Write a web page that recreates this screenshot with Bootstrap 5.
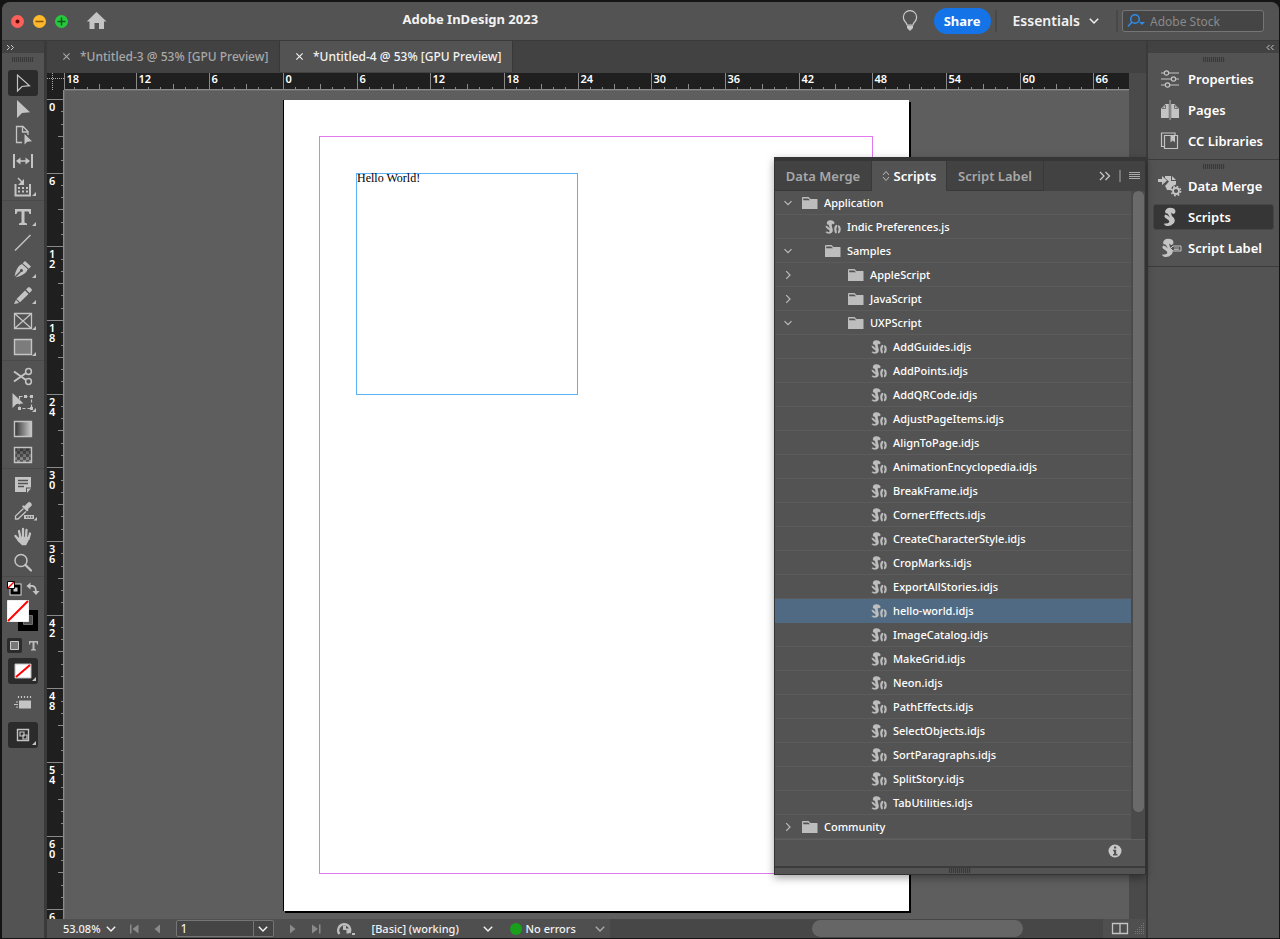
<!DOCTYPE html>
<html lang="en">
<head>
<meta charset="utf-8">
<meta name="viewport" content="width=device-width, initial-scale=1">
<title>Adobe InDesign 2023</title>
<link href="https://cdn.jsdelivr.net/npm/bootstrap@5.3.0/dist/css/bootstrap.min.css" rel="stylesheet">
<style>
:root{--face:#535353;--well:#424242;--edge:#3a3a3a;--icon:#c4c4c4}
body{background:#141414;color:#f2f2f2;font:500 11px/16px "Noto Sans",sans-serif}
button{color:inherit;font:inherit;background:none;border:0;padding:0}
a{color:inherit;text-decoration:none}
svg{display:block;flex:none}
h1{font-size:13px;line-height:16px;font-weight:700}
.app{min-height:100vh;padding:2px 1px 1px 2px}
.window{border-radius:8px 8px 0 0;background:var(--edge);overflow:hidden}
.titlebar{height:38px;background:var(--face);padding:0 15px 0 9px}
.light-dot{width:13px;height:13px;border-radius:50%;display:block}
.name-box{padding-right:70px}
.share{height:26px;width:57px;border-radius:13px;background:#1473e6;color:#fff;font-size:13px;font-weight:700}
.rule-v{width:2px;height:22px;background:#484848}
.workspace{font-size:14px;font-weight:600}
.stock{width:142px;height:22px;border:1px solid #757575;border-radius:3px;background:#454545;padding:0 4px}
.stock input{background:none;border:0;outline:0;color:#fff;width:100px;font-size:12px;padding:0;height:18px}
.stock input::placeholder{color:#8a8a8a;opacity:1}
.strip{height:12px;background:var(--well)}
.grip{width:22px;height:5px;background:repeating-linear-gradient(90deg,#3a3a3a 0 1px,#4e4e4e 1px 2px)}
.tools{width:42px;background:var(--face)}
.tool{width:30px;height:26px;color:var(--icon);border-radius:3px}
.tool.chosen{background:#2b2b2b}
.tool-line{height:4px;border-top:1px solid #4a4a4a;width:42px}
.tool-modes{gap:6px}
.doc-area{margin-left:3px;min-width:0}
.doc-tabs{height:32px;background:var(--well)}
.doc-tab{width:233px;font-size:12px;color:#a8a8a8;border-right:1px solid #383838;padding-left:15px;gap:9px;height:31px}
.doc-tab.open{background:var(--face);color:#f4f4f4}
.corner{width:17px;height:17px}
.ruler{background:#1f1f1f;overflow:hidden}
.ruler text{fill:#fff;font:600 11px "Noto Sans",sans-serif}
.digits{color:#fff;font:600 11px/10px "Noto Sans",sans-serif;width:8px;word-break:break-all}
.ruler-h{height:17px;width:0}
.ruler-v{width:17px;height:829px}
.canvas{background:#5e5e5e;min-height:829px;padding:9px 0 8px 218px;border-left:1px solid #6c6c6c;border-top:1px solid #6c6c6c;overflow:hidden;min-width:0}
.sheet{width:626px;height:811px;background:#fff;border-left:1px solid #000;box-shadow:2px 2px 0 #000;padding:36px 36px 36px 35px}
.margins{width:554px;height:738px;border:1px solid #e078ee;padding:36px}
.frame{width:222px;height:222px;border:1px solid #5cb0f8;color:#000;font:12px/9px "Liberation Serif",serif}
.scroll-v{width:17px;background:#4a4a4a}
.status{height:19px;background:#4f4f4f}
.status .track{background:#474747}
.status .thumb{width:211px;height:17px;border-radius:9px;background:#666;margin-right:32px}
.page-no{width:78px;height:17px;background:#454545;border:1px solid #757575;border-radius:2px 0 0 2px;color:#fff;font-size:12px;padding:0 4px;margin-left:13px}
.page-pick{width:20px;height:17px;background:#454545;border:1px solid #757575;border-left:0;border-radius:0 2px 2px 0}
.preset{width:110px}
.preflight{width:68px}
.dock{width:131px;background:var(--face);margin-left:2px}
.dock-item{height:26px;width:121px;margin:0 5px 5px 5px;padding-left:4px;gap:6px;font-size:13px;font-weight:600;color:#fff;border:1px solid transparent;border-radius:3px}
.dock-item.chosen{background:#363636;border-color:#474747}
.dock-group{border-bottom:1px solid #3c3c3c}
.palette{right:0;top:116px;width:372px;background:var(--face);border:1px solid #333;border-top:4px solid #363636;box-shadow:0 3px 8px rgba(0,0,0,.35)}
.palette-tabs{height:30px;background:var(--well);font-size:13px;font-weight:600;color:#a8a8a8}
.palette-tabs .ptab{border-right:1px solid #383838;border-bottom:1px solid #383838}
.palette-tabs .ptab.open{background:var(--face);color:#fff;border-bottom-color:var(--face)}
.wide-tab{width:97px}
.slim-tab{width:75px}
.tree-box{border-bottom:1px solid #606060}
.tree-row{height:24px;border-bottom:1px solid #5b5b5b;width:100%;color:#fff;text-align:left}
.tree-row.chosen{background:#4f6a82;border-color:#4f6a82}
.twist{width:19px;margin-left:8px}
.lv0{padding-left:0}.lv1{padding-left:23px}.lv2{padding-left:46px}.lv3{padding-left:69px}
.tree-row .pic{width:22px}
.bar{width:14px;background:#4a4a4a;padding:0 1px 0 2px}
.bar div{height:621px;border-radius:6px;background:#6a6a6a}
.foot{height:26px;padding-right:23px}
.foot-edge{height:8px;border-top:2px solid #3c3c3c}
</style>
</head>
<body>
<svg width="0" height="0" class="position-absolute" aria-hidden="true">
<symbol id="down" viewBox="0 0 10 10"><path d="M1.500 3.200 5 6.700l3.500-3.500" fill="none" stroke="currentColor" stroke-width="1.200"/></symbol>
<symbol id="right" viewBox="0 0 10 10"><path d="M3.200 1.200 7 5 3.200 8.800" fill="none" stroke="currentColor" stroke-width="1.200"/></symbol>
<symbol id="cross" viewBox="0 0 10 10"><path d="M1.500 1.500l7 7m0-7-7 7" fill="none" stroke="currentColor" stroke-width="1.200"/></symbol>
<symbol id="folder" viewBox="0 0 16 13"><path d="M0 1.500Q0 0.500 1 0.500H6.500L8.500 2.500H15Q15.500 2.500 15.500 3V12.500H0z" fill="#bdbdbd"/><path d="M1.200 2H6.200L8 3.800H1.200z" fill="#535353"/></symbol>
<symbol id="script" viewBox="0 0 16 14"><path d="M1.800 3.200Q2 .4 5.200.3T9.600 2.600Q9.600 4.600 7.600 4.200L7 3.600Q6.300 5.400 7.300 7.800 9 12.400 5.200 13.600 1.800 14 .4 12q1.600-1.200 3.400.2Q5 11.800 4.400 10.200L2.200 8.800Q.4 7.400.5 5.600 3 6 4.700 8.400 4.200 6 3.600 4.800 1.800 4.800 1.800 3.200z" fill="#bdbdbd"/><path d="M11.600 4.800Q9.200 5.600 9.200 9q0 3.400 1.600 4.600 1.400-.4 1-1.800-1-3 .6-6.200zM13.400 5q2.400 1 2.400 4.200 0 3-2.200 4.400-1-.6-.5-2 1.300-2.800-.3-5.400z" fill="#bdbdbd"/></symbol>
<symbol id="bigs" viewBox="0 0 16 20"><path d="M3 5Q3.500 1 8 .8q5.500.2 5.500 4-.5 2.400-2.600 2.200L9.500 5.500Q8.800 8.500 11.500 10.500q2.600 3 0 6Q8 20 4 18.800q-2.200-.8-1.800-2.400 3.600.6 5.200-1.400 0-2-2.800-3.200Q1 10 3.200 7.600q2.800.4 4.600 3-1-2.400-2-3.800Q3.400 6.600 3 5z" fill="#c4c4c4"/></symbol>
</svg>

<div class="app d-flex flex-column"><div class="window d-flex flex-column flex-grow-1">
<header class="titlebar d-flex align-items-center">
  <div class="d-flex align-items-center" style="gap:9px">
    <button aria-label="Close" class="light-dot"><svg width="13" height="13"><circle cx="6.500" cy="6.500" r="6.500" fill="#fc605a"/><circle cx="6.500" cy="6.500" r="2" fill="#5c0a08"/></svg></button>
    <button aria-label="Minimise" class="light-dot"><svg width="13" height="13"><circle cx="6.500" cy="6.500" r="6.500" fill="#fdb92b"/><path d="M2.500 6.500h8" stroke="#8a5304" stroke-width="1.400"/></svg></button>
    <button aria-label="Zoom" class="light-dot"><svg width="13" height="13"><circle cx="6.500" cy="6.500" r="6.500" fill="#27c83f"/><path d="M2.500 6.500h8m-4-4v8" stroke="#0a5c14" stroke-width="1.500"/></svg></button>
    <button aria-label="Home" class="ms-2"><svg width="24" height="18"><path d="M11.500 0 21.500 9.500H19V17H14V11H9.500V17H4.500V9.500H1.800z" fill="#c4c4c4"/></svg></button>
  </div>
  <h1 class="name-box flex-fill text-center m-0 pb-1">Adobe InDesign 2023</h1>
  <button aria-label="Tips" class="me-3"><svg width="16" height="22"><path d="M5 15Q5 13.500 3 11.500A6.600 6.600 0 1 1 13 11.500Q11 13.500 11 15z" fill="none" stroke="#c8c8c8" stroke-width="1.200"/><path d="M5 15.500H11V18L9.500 19.500 8 21 6.500 19.500 5 18z" fill="#c8c8c8"/></svg></button>
  <button class="share">Share</button>
  <span class="rule-v ms-1 me-3"></span>
  <button class="workspace d-flex align-items-center gap-2">Essentials<svg width="12" height="12"><use href="#down"/></svg></button>
  <span class="rule-v ms-3 me-1"></span>
  <label class="stock d-flex align-items-center gap-1"><svg width="19" height="16" fill="none" stroke="#2f8ceb" stroke-width="1.500"><circle cx="8" cy="6" r="4.300"/><path d="M5 9 1 13.500"/><path d="M12 9h6l-3 3z" fill="#2f8ceb" stroke="none"/></svg><input type="text" placeholder="Adobe Stock" aria-label="Search Adobe Stock"></label>
</header>

<div class="d-flex flex-grow-1" style="padding-top:1px">
<nav class="tools d-flex flex-column align-items-center" aria-label="Tools">
  <div class="strip w-100 ps-1"><svg width="9" height="12" fill="none" stroke="#ccc"><path d="M1 4l2.500 2.500L1 9M5 4l2.500 2.500L5 9"/></svg></div>
  <div class="grip mt-1 mb-2"></div>
  <button class="tool chosen" aria-label="Selection"><svg width="30" height="26"><path d="M9.500 5v16L14 16.500l7.500-.8z" fill="none" stroke="currentColor" stroke-width="1.200"/></svg></button>
  <button class="tool" aria-label="Direct selection"><svg width="30" height="26"><path d="M9 4v18l5-5 8-.8z" fill="currentColor"/></svg></button>
  <button class="tool" aria-label="Page"><svg width="30" height="26"><path d="M14 20.500H8.500V4.500H15L20 9.500V13M14.500 4.500V10H20" fill="none" stroke="currentColor" stroke-width="1.300"/><path d="M16.500 12v10.500l2.800-2.800 4.700-.5z" fill="currentColor"/></svg></button>
  <button class="tool" aria-label="Gap"><svg width="30" height="26" stroke="currentColor"><path d="M6 6v14M24 6v14" stroke-width="2"/><path d="M9 13h12" stroke-width="1.500"/><path d="M8 13l4.500-3.500v7zM22 13l-4.500-3.500v7z" fill="currentColor" stroke="none"/></svg></button>
  <button class="tool" aria-label="Content collector"><svg width="30" height="26"><path d="M7.500 10v11.500h14.500V10" fill="none" stroke="currentColor" stroke-width="2"/><path d="M10 13h2v2h-2zm4 0h2v2h-2zm4 0h2v2h-2zM10 16.500h2v2h-2zm4 0h2v2h-2zm4 0h2v2h-2z" fill="currentColor"/><path d="M10 4l5 5" stroke="currentColor" stroke-width="1.500"/><path d="M16 5v6h-6z" fill="currentColor"/><path d="M28 18v4h-4z" fill="currentColor"/></svg></button>
  <div class="tool-line"></div>
  <button class="tool" aria-label="Type"><svg width="30" height="26" fill="currentColor"><path d="M7 5H23V10H21.500L20.500 7.500H16.500V18.500L19 19.500V21H11V19.500L13.500 18.500V7.500H9.500L8.500 10H7z"/><path d="M28 18v4h-4z"/></svg></button>
  <button class="tool" aria-label="Line"><svg width="30" height="26"><path d="M7 20.500 22.500 5" stroke="currentColor" stroke-width="1.500"/></svg></button>
  <button class="tool" aria-label="Pen"><svg width="30" height="26" fill="currentColor"><path d="M17 5l6 5.500-2.200 2.200L14.700 7.200zM14 8l5.800 5.300Q18 19 7.500 21.500L13 16a1.500 1.500 0 1 0-1-1L6.500 20.500Q8.500 10 14 8z"/><path d="M28 18v4h-4z"/></svg></button>
  <button class="tool" aria-label="Pencil"><svg width="30" height="26" fill="currentColor"><path d="M18 7.500l2-2q1-1 2 0l1.500 1.500q1 1 0 2l-2 2zM17 8.500l3.500 3.500-8.500 8.200L8.500 17zM8 17.800 11 21l-5 1z"/><path d="M28 18v4h-4z"/></svg></button>
  <button class="tool" aria-label="Rectangle frame"><svg width="30" height="26"><path d="M6.500 5.500h17v15h-17zl17 15m0-15-17 15" fill="none" stroke="currentColor" stroke-width="1.300"/><path d="M28 18v4h-4z" fill="currentColor"/></svg></button>
  <button class="tool" aria-label="Rectangle"><svg width="30" height="26"><path d="M6.500 5.500h17v15h-17z" fill="#7c7c7c" stroke="currentColor" stroke-width="1.400"/><path d="M28 18v4h-4z" fill="currentColor"/></svg></button>
  <div class="tool-line"></div>
  <button class="tool" aria-label="Scissors"><svg width="30" height="26" fill="none" stroke="currentColor" stroke-width="1.500"><circle cx="20.500" cy="7.500" r="2.900"/><circle cx="20.500" cy="17.500" r="2.900"/><path d="M18 9 6 17.500M18 16 6 7.500" stroke-width="2"/></svg></button>
  <button class="tool" aria-label="Free transform"><svg width="30" height="26"><path d="M11.500 6.500h12v12h-12z" fill="none" stroke="currentColor" stroke-width="1.200" stroke-dasharray="3 2"/><path d="M10 17h3v3h-3zM22 17h3v3h-3zM22 5h3v3h-3zM16 5h3v3h-3z M4.500 3v15l4-4 7-.5z" fill="currentColor"/><path d="M28 18v4h-4z" fill="currentColor"/></svg></button>
  <button class="tool" aria-label="Gradient swatch"><svg width="30" height="26"><defs><linearGradient id="g"><stop stop-color="#333"/><stop offset="1" stop-color="#ccc"/></linearGradient></defs><path d="M6.500 5.500h17v15h-17z" fill="url(#g)" stroke="currentColor" stroke-width="1.400"/></svg></button>
  <button class="tool" aria-label="Gradient feather"><svg width="30" height="26"><defs><pattern id="ck" width="6" height="6" patternUnits="userSpaceOnUse"><path d="M0 0h6v6H0z" fill="#999"/><path d="M0 0h3v3H0zM3 3h3v3H3z" fill="#5a5a5a"/></pattern><linearGradient id="fade" x2="0" y2="1"><stop stop-color="#222" stop-opacity=".7"/><stop offset="1" stop-color="#222" stop-opacity="0"/></linearGradient></defs><path d="M6.500 5.500h17v15h-17z" fill="url(#ck)"/><path d="M6.500 5.500h17v15h-17z" fill="url(#fade)" stroke="currentColor" stroke-width="1.400"/></svg></button>
  <div class="tool-line"></div>
  <button class="tool" aria-label="Note"><svg width="30" height="26"><path d="M7 5h16v10.500h-5V20H7z M23 16.500 19 21v-4.500z" fill="currentColor"/><path d="M10 8.500h10M10 11.500h10M10 14.500h6" stroke="#535353" stroke-width="1.300"/></svg></button>
  <button class="tool" aria-label="Colour theme"><svg width="30" height="26"><path d="M16.500 8 20 4.500q1.500-1 3 .5t.3 3L20 11l.5 1.200-1.500 1.300-5-5 1.200-1.300z" fill="currentColor"/><path d="M15.500 10.500 7.500 18v3H10l8-7.500" fill="none" stroke="currentColor" stroke-width="1.300"/><path d="M16 17h10v4H16z" fill="currentColor"/><path d="M18 19h7" stroke="#535353" stroke-width="1.500" stroke-dasharray="1.500 1"/><path d="M29 19v3.500h-3.500z" fill="currentColor"/></svg></button>
  <button class="tool" aria-label="Hand"><svg width="30" height="26" fill="none" stroke="currentColor" stroke-linecap="round" stroke-width="2.300"><path d="M11 7l1.500 7M15 5v8M18.500 6 18 14M22 9.500 20.500 15M7.500 12l4 5"/><path d="M11.500 14h8q.5 3-2 6h-3q-2-2-4-4z" fill="currentColor"/></svg></button>
  <button class="tool" aria-label="Zoom"><svg width="30" height="26" fill="none" stroke="currentColor"><circle cx="13" cy="10.500" r="6" stroke-width="1.500"/><path d="M17.500 15 23 20.500" stroke-width="2.300" stroke-linecap="round"/></svg></button>
  <div class="tool-line"></div>
  <div class="d-flex"><button aria-label="Default fill and stroke"><svg width="20" height="18"><path d="M7 6h7v7H7z" fill="#666" stroke="#ddd" stroke-width="5"/><path d="M7 6h7v7H7z" fill="#ccc" stroke="#000" stroke-width="3"/><path d="M2.500 1.500h7v7h-7z" fill="#fff" stroke="#000"/><path d="M3 8l6-6" stroke="#f00" stroke-width="1.500"/></svg></button><button aria-label="Swap fill and stroke"><svg width="16" height="18"><path d="M5 6q6-1 6 5.500" fill="none" stroke="#c4c4c4" stroke-width="1.800"/><path d="M5.500 2.500v7L1.500 6zM7.500 11h7L11 15z" fill="#c4c4c4"/></svg></button></div>
  <svg class="mb-1" width="32" height="36" role="img" aria-label="Fill and stroke"><path d="M14 15h14v15H14z" fill="#535353" stroke="#000" stroke-width="6"/><path d="M16.500 17.500h9v9h-9z" fill="none" stroke="#707070"/><path d="M.5 2.500h21v21H.5z" fill="#fff" stroke="#eee"/><path d="M1 23 21 3" stroke="#f00" stroke-width="2"/></svg>
  <div class="d-flex gap-1"><button aria-label="Format container"><svg width="15" height="16"><rect width="15" height="15" rx="2" fill="#2b2b2b"/><path d="M3.500 3.500h8v8h-8z" fill="#777" stroke="#ccc"/></svg></button><button aria-label="Format text"><svg width="14" height="16" fill="#bbb"><path d="M3 3h9v3.500h-1L10.500 4.500H8.500V11l1.500.5v1H5v-1L6.500 11V4.500H4.500L4 6.500H3z"/></svg></button></div>
  <div class="tool-modes d-flex flex-column mt-1">
  <button class="tool chosen" aria-label="Apply none"><svg width="30" height="26"><path d="M7 6h16v14H7z" fill="#fff" stroke="#bbb"/><path d="M8 19 22 7" stroke="#f00" stroke-width="2"/><path d="M28 19v4h-4z" fill="currentColor"/></svg></button>
  <button class="tool" aria-label="View mode"><svg width="30" height="26"><path d="M11 10.500h12v8H11z" fill="currentColor"/><path d="M10.500 6v2m3-2v2m3-2v2m3-2v2m3-2v2M8 12h2M6 14.500h4M8 17h2" stroke="currentColor" stroke-width="1.200"/></svg></button>
  <button class="tool chosen" aria-label="Screen mode"><svg width="30" height="26"><path d="M9.500 7.500h11v11h-11z" fill="none" stroke="currentColor" stroke-width="1.400"/><path d="M12 10h4v4h-4zm3 3h4v4h-4z" fill="none" stroke="currentColor" stroke-width="1.200"/><path d="M28 19v4h-4z" fill="currentColor"/></svg></button>
  </div>
</nav>

<main class="doc-area d-flex flex-column flex-fill position-relative">
  <div class="doc-tabs d-flex">
    <div class="doc-tab d-flex align-items-center"><button aria-label="Close Untitled-3"><svg width="9" height="9"><use href="#cross"/></svg></button><a href="#">*Untitled-3 @ 53% [GPU Preview]</a></div>
    <div class="doc-tab open d-flex align-items-center"><button aria-label="Close Untitled-4"><svg width="9" height="9"><use href="#cross"/></svg></button><a href="#">*Untitled-4 @ 53% [GPU Preview]</a></div>
  </div>
  <div class="d-flex">
    <div class="ruler corner"><svg width="17" height="17" stroke="#aaa" stroke-dasharray="1 1"><path d="M5.500 0v17M0 5.500h17"/></svg></div>
    <div class="ruler ruler-h flex-fill"><svg id="hr" width="100%" height="17"></svg></div>
    <div class="scroll-v"></div>
  </div>
  <div class="d-flex flex-grow-1">
    <div class="ruler ruler-v"><svg id="vr" width="17" height="829"></svg></div>
    <div class="canvas flex-fill">
      <div class="sheet"><div class="margins"><div class="frame">Hello World!</div></div></div>
    </div>
    <div class="scroll-v"></div>
  </div>
  <footer class="status d-flex align-items-center">
    <button class="d-flex align-items-center gap-1 ms-3">53.08%<svg width="12" height="12"><use href="#down"/></svg></button>
    <button class="ms-2 ps-1" aria-label="First page"><svg width="12" height="10" fill="#8a8a8a"><path d="M1 .5h1.500v9H1zM9.500.5v9L3.500 5z"/></svg></button>
    <button class="ms-2 ps-1" aria-label="Previous page"><svg width="10" height="10" fill="#8a8a8a"><path d="M7 .5v9L1.500 5z"/></svg></button>
    <input type="text" class="page-no" value="1" aria-label="Page number">
    <button class="page-pick d-flex align-items-center justify-content-center" aria-label="Choose page"><svg width="12" height="12"><use href="#down"/></svg></button>
    <button class="ms-3" aria-label="Next page"><svg width="10" height="10" fill="#8a8a8a"><path d="M0 .5v9L5.500 5z"/></svg></button>
    <button class="ms-2 ps-1" aria-label="Last page"><svg width="12" height="10" fill="#8a8a8a"><path d="M0 .5v9L6 5zM7 .5h1.500v9H7z"/></svg></button>
    <button class="ms-2 ps-1" aria-label="Open in Bridge"><svg width="20" height="16"><path d="M3.500 13A6 6 0 1 1 13.500 12" fill="none" stroke="#bdbdbd" stroke-width="2.500"/><path d="M7 4.500h3v3h3v5H10.500V9H7z" fill="#bdbdbd"/><path d="M16 12h3v2h-3z" fill="#bdbdbd"/></svg></button>
    <button class="ms-3 d-flex align-items-center"><span class="preset text-start">[Basic] (working)</span><svg width="12" height="12"><use href="#down"/></svg></button>
    <button class="ms-3 d-flex align-items-center"><svg width="12" height="12"><circle cx="6" cy="6" r="6" fill="#18a01c"/></svg><span class="preflight text-start ms-1">No errors</span><svg width="12" height="12" style="color:#aaa"><use href="#down"/></svg></button>
    <div class="track flex-fill h-100 d-flex align-items-center justify-content-end ms-1 pe-5"><div class="thumb"></div></div>
    <button aria-label="Split view" class="ms-2 me-1"><svg width="18" height="13"><path d="M1.500 1.500h15v10h-15zM9 1.500v10" fill="none" stroke="#c4c4c4" stroke-width="1.300"/></svg></button>
    <svg width="13" height="13" stroke="#777" stroke-dasharray="1 1"><path d="M10.500 1v12M8.500 3v10M6.500 5v8M4.500 7v6M2.500 9v4"/></svg>
  </footer>

  <section class="palette position-absolute">
    <div class="palette-tabs d-flex">
      <a href="#" class="ptab wide-tab d-flex align-items-center justify-content-center">Data Merge</a>
      <a href="#" class="ptab slim-tab open d-flex align-items-center justify-content-center gap-1"><svg width="8" height="12" fill="none" stroke="#bbb"><path d="M1 5l3-3.500L7 5M1 7l3 3.500L7 7"/></svg>Scripts</a>
      <a href="#" class="ptab wide-tab d-flex align-items-center justify-content-center">Script Label</a>
      <div class="flex-fill d-flex align-items-center justify-content-end gap-2 pe-1"><button aria-label="Collapse"><svg width="12" height="12" fill="none" stroke="#ccc" stroke-width="1.200"><path d="M1 2l4 4-4 4M6.500 2l4 4-4 4"/></svg></button><svg width="2" height="12"><path d="M1 0v12" stroke="#aaa"/></svg><button aria-label="Panel menu"><svg width="12" height="12" stroke="#aaa"><path d="M0 2.500h11M0 4.500h11M0 6.500h11M0 8.500h11"/></svg></button></div>
    </div>
    <div class="tree-box d-flex">
      <div class="flex-fill" id="tree"></div>
      <div class="bar"><div></div></div>
    </div>
    <div class="foot d-flex align-items-center justify-content-end pb-1"><button aria-label="Information"><svg width="14" height="14"><circle cx="7" cy="7" r="6.500" fill="#c8c8c8"/><path d="M6 2.500h2.200v2H6zM5 5.700h3.200v4.300H9.500v1.500H5V10h1V7.200H5z" fill="#535353"/></svg></button></div>
    <div class="foot-edge d-flex justify-content-center"><div class="grip"></div></div>
  </section>
</main>

<aside class="dock">
  <div class="strip d-flex justify-content-end pe-1"><svg width="9" height="12" fill="none" stroke="#ccc"><path d="M3.500 4 1 6.500 3.500 9M7.500 4 5 6.500 7.500 9"/></svg></div>
  <div class="dock-group pt-1">
    <div class="grip mx-auto mb-1"></div>
    <a href="#" class="dock-item d-flex align-items-center"><svg width="24" height="22" fill="none" stroke="#c4c4c4" stroke-width="1.200"><path d="M3 5h3m5 0h10M3 11h10m5 0h3M3 17h4m5 0h9"/><circle cx="8.500" cy="5" r="2.200"/><circle cx="15.500" cy="11" r="2.200"/><circle cx="9.500" cy="17" r="2.200"/></svg>Properties</a>
    <a href="#" class="dock-item d-flex align-items-center"><svg width="24" height="22" fill="#c4c4c4"><path d="M3 19V9.500L7.500 5H10.800V19zM21 19V9.500L16.500 5H13.200V19z"/><path d="M4 9.500H7.500V6zM20 9.500H16.500V6z" stroke="#535353" stroke-width=".7"/><path d="M11.600 1h.9v20h-.9z"/></svg>Pages</a>
    <a href="#" class="dock-item d-flex align-items-center"><svg width="24" height="22" fill="none" stroke="#c4c4c4" stroke-width="1.200"><path d="M6.500 5.500h13v13h-13zM6 16.500H3.500V3H17v2"/><path d="M12.500 5.500v7l2.200-2 2.300 2v-7z" fill="#c4c4c4" stroke="none"/></svg>CC Libraries</a>
  </div>
  <div class="dock-group pt-1">
    <div class="grip mx-auto mb-1"></div>
    <a href="#" class="dock-item d-flex align-items-center"><svg width="24" height="24" fill="#c4c4c4"><path d="M0 5h4V2l5 4.500L4 11V8H0z"/><path d="M7 2h6v5h5v3.500l-4 2-1 3.500H9q-1-3-2-4l4-4.500L7 4z M14 2l4 4h-4z"/><circle cx="18" cy="17" r="3" fill="#535353" stroke="#c4c4c4" stroke-width="1.800"/><circle cx="18" cy="17" r="4.600" fill="none" stroke="#c4c4c4" stroke-width="1.600" stroke-dasharray="1.800 1.810"/></svg>Data Merge</a>
    <a href="#" class="dock-item chosen d-flex align-items-center"><svg width="24" height="20" viewBox="-4 0 24 20"><use href="#bigs" width="16" height="20"/></svg>Scripts</a>
    <a href="#" class="dock-item d-flex align-items-center"><svg width="24" height="20" viewBox="-2 0 24 20"><use href="#bigs" width="16" height="20"/><path d="M10.500 10.500 13 8H21v5h-8z" fill="#535353" stroke="#c4c4c4"/><path d="M14 10h5M14 11.500h5" stroke="#c4c4c4" stroke-width=".8"/></svg>Script Label</a>
  </div>
</aside>
</div>
</div></div>

<script src="https://cdn.jsdelivr.net/npm/bootstrap@5.3.0/dist/js/bootstrap.bundle.min.js"></script>
<script>
// Rulers: a tick for each pica, a labelled one every six.
const pica = 12.277, line = (x1, y1, x2, y2) => `<path d="M${x1} ${y1}L${x2} ${y2}" stroke="#8a8a8a"/>`;
function drawRulers() {
  const hr = document.getElementById('hr'), width = hr.parentElement.clientWidth;
  let h = line(0, 16.5, width, 16.5), v = line(16.5, 0, 16.5, 829);
  for (let p = -18; 219 + p * pica < width; p++) {
    const x = Math.max(0, Math.round(219 + p * pica)) + .5, six = p % 6 === 0;
    h += line(x, six ? 0 : p % 3 === 0 ? 11 : 14, x, 17);
    if (six && x + 18 < width) h += `<text x="${x + 2}" y="10">${Math.abs(p)}</text>`;
  }
  for (let p = 0; 9 + p * pica < 829; p++) {
    const y = Math.round(9 + p * pica) + .5, six = p % 6 === 0;
    v += line(six ? 0 : p % 3 === 0 ? 11 : 14, y, 17, y);
    if (six) v += `<foreignObject x="2" y="${y + 2.5}" width="9" height="24"><div class="digits">${p}</div></foreignObject>`;
  }
  hr.innerHTML = h;
  document.getElementById('vr').innerHTML = v;
}
drawRulers();
addEventListener('resize', drawRulers);

// Script tree: [level, folder state, label]
const samples = 'AddGuides AddPoints AddQRCode AdjustPageItems AlignToPage AnimationEncyclopedia BreakFrame CornerEffects CreateCharacterStyle CropMarks ExportAllStories hello-world ImageCatalog MakeGrid Neon PathEffects SelectObjects SortParagraphs SplitStory TabUtilities'.split(' ');
const rows = [[0, 'down', 'Application'], [1, '', 'Indic Preferences.js'], [1, 'down', 'Samples'], [2, 'right', 'AppleScript'], [2, 'right', 'JavaScript'], [2, 'down', 'UXPScript'],
  ...samples.map(s => [3, '', s + '.idjs']), [0, 'right', 'Community']];
document.getElementById('tree').innerHTML = rows.map(([lv, kind, label]) => `
  <button class="tree-row d-flex align-items-center ${label === 'hello-world.idjs' ? 'chosen' : ''}">
    <span class="twist">${kind ? `<svg width="10" height="10" style="color:#bbb"><use href="#${kind}"/></svg>` : ''}</span>
    <span class="lv${lv} d-flex align-items-center"><span class="pic"><svg width="16" height="14"><use href="#${kind ? 'folder' : 'script'}"/></svg></span>${label}</span>
  </button>`).join('');
</script>
</body>
</html>
